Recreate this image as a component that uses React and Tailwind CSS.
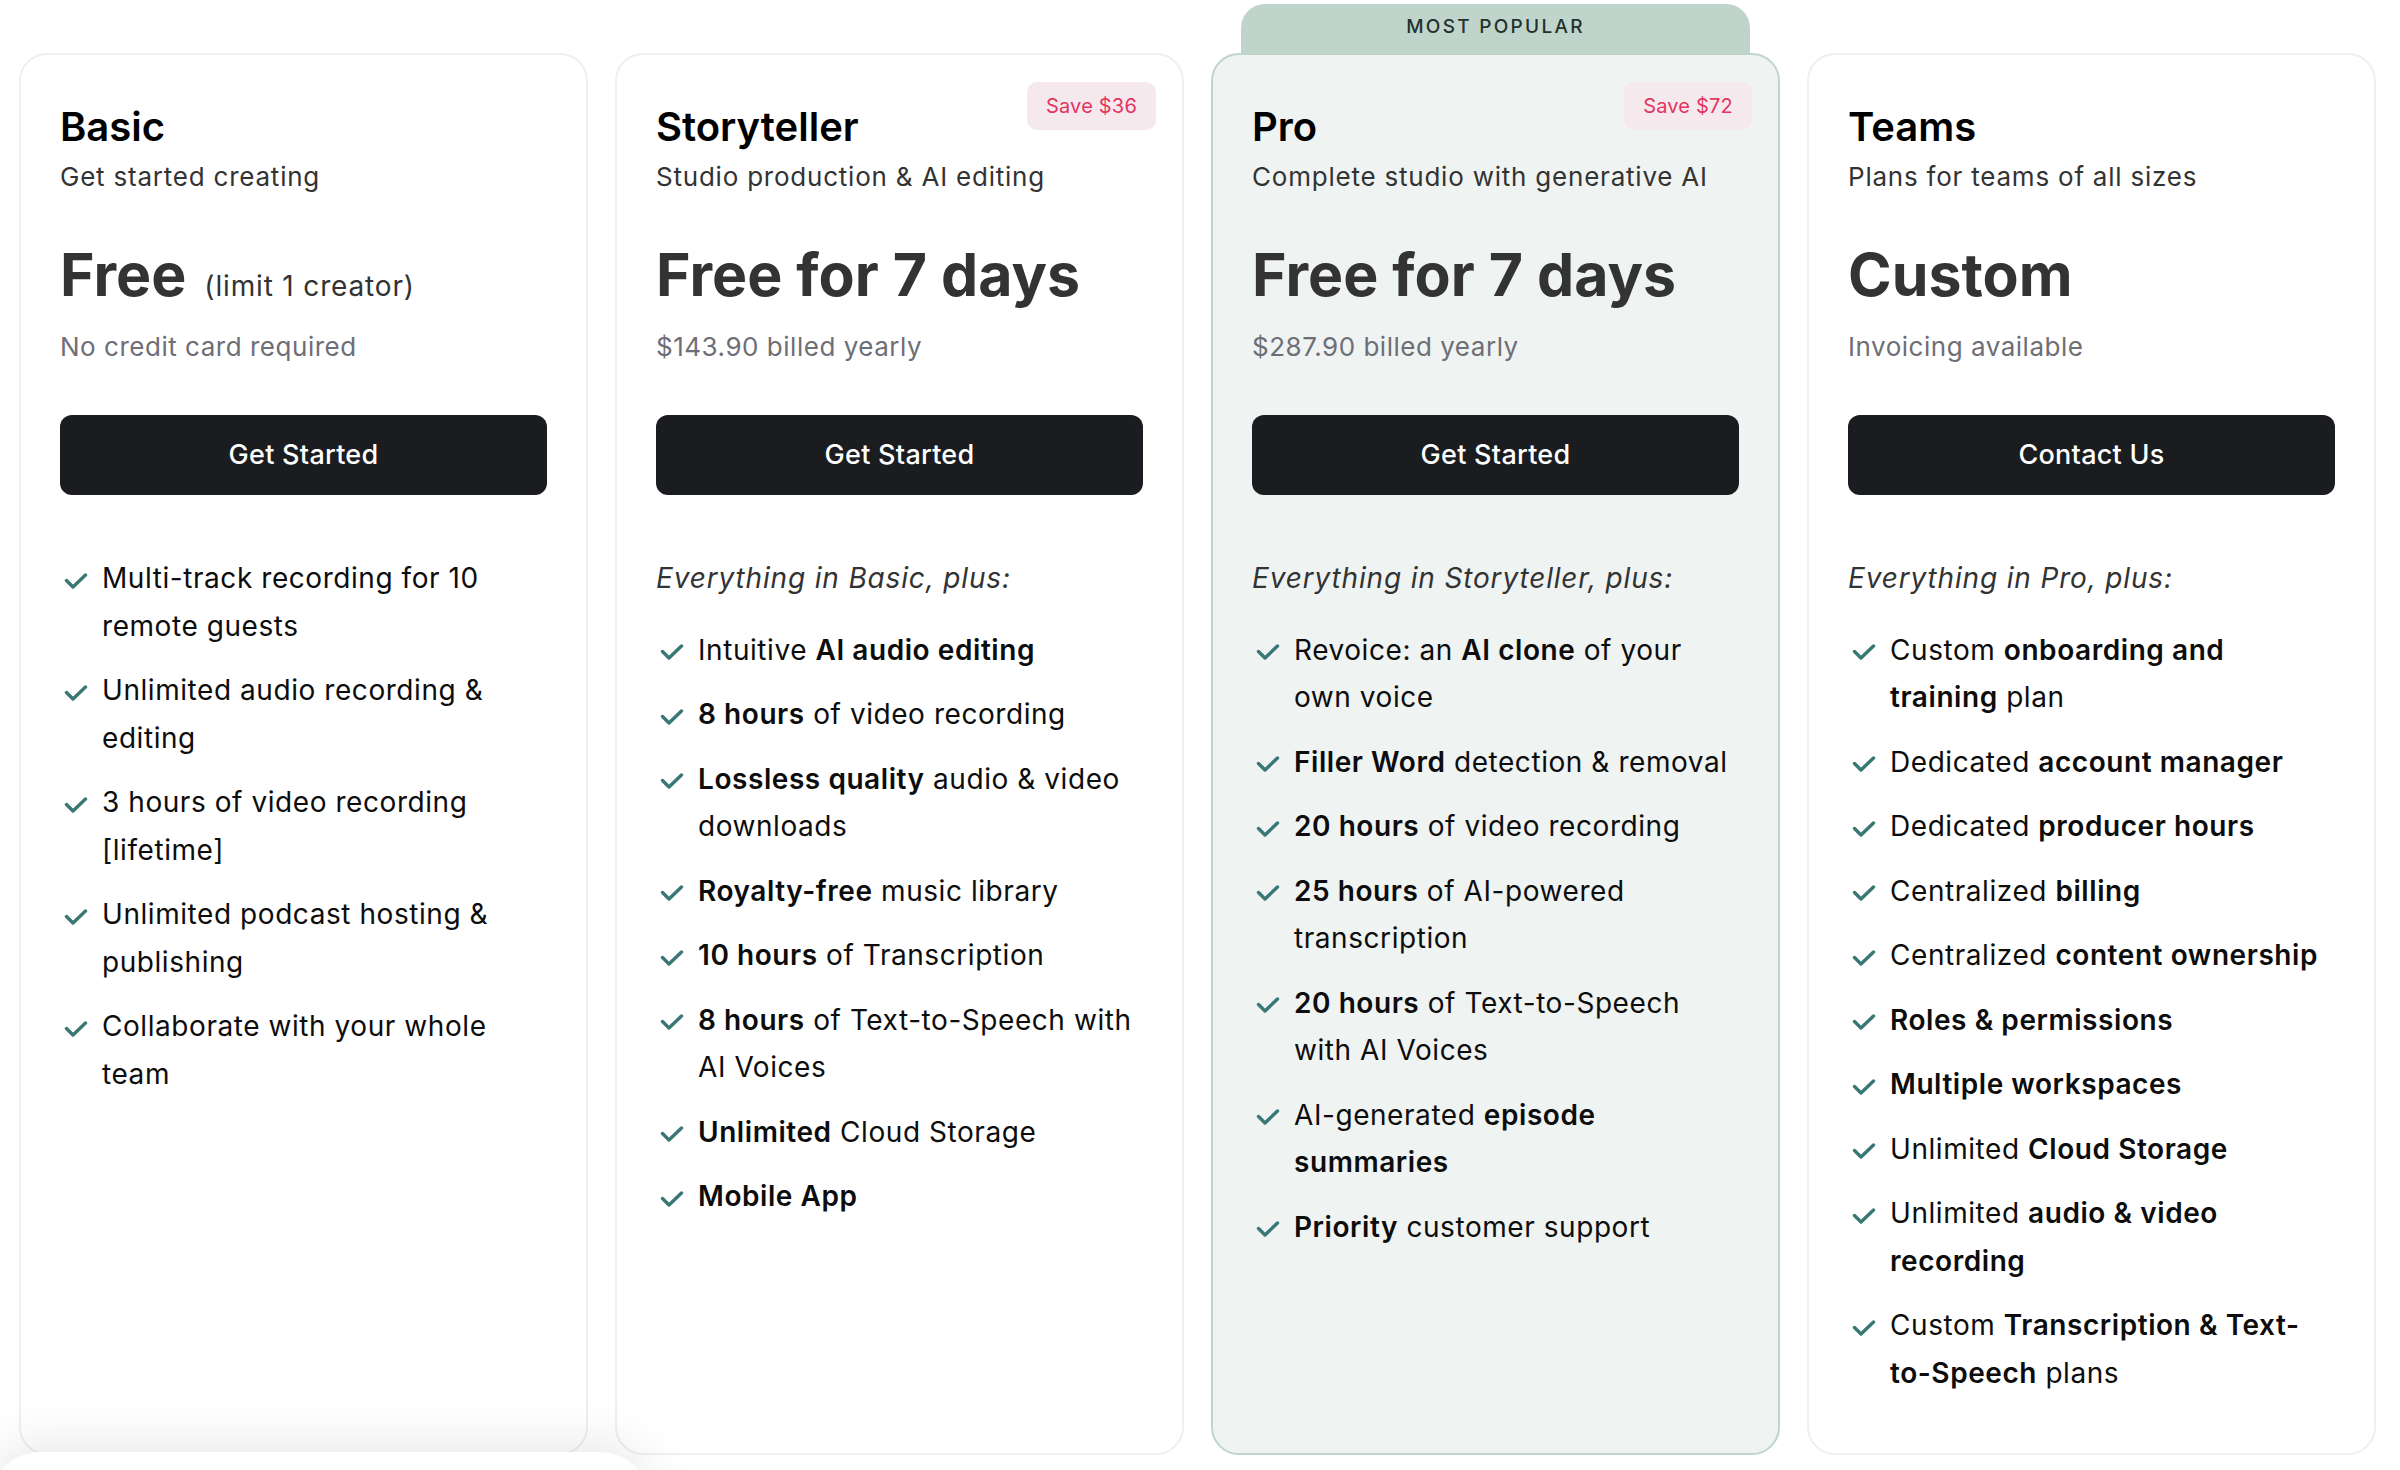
import React from 'react';

const plans = [
  {
    name: 'Basic',
    tagline: 'Get started creating',
    price: 'Free',
    priceNote: '(limit 1 creator)',
    sub: 'No credit card required',
    cta: 'Get Started',
    features: [
      'Multi-track recording for 10\nremote guests',
      'Unlimited audio recording &\nediting',
      '3 hours of video recording\n[lifetime]',
      'Unlimited podcast hosting &\npublishing',
      'Collaborate with your whole\nteam',
    ],
  },
  {
    name: 'Storyteller',
    tagline: 'Studio production & AI editing',
    price: 'Free for 7 days',
    sub: '$143.90 billed yearly',
    cta: 'Get Started',
    save: 'Save $36',
    intro: 'Everything in Basic, plus:',
    features: [
      'Intuitive **AI audio editing**',
      '**8 hours** of video recording',
      '**Lossless quality** audio & video\ndownloads',
      '**Royalty-free** music library',
      '**10 hours** of Transcription',
      '**8 hours** of Text-to-Speech with\nAI Voices',
      '**Unlimited** Cloud Storage',
      '**Mobile App**',
    ],
  },
  {
    name: 'Pro',
    tagline: 'Complete studio with generative AI',
    price: 'Free for 7 days',
    sub: '$287.90 billed yearly',
    cta: 'Get Started',
    save: 'Save $72',
    popular: true,
    intro: 'Everything in Storyteller, plus:',
    features: [
      'Revoice: an **AI clone** of your\nown voice',
      '**Filler Word** detection & removal',
      '**20 hours** of video recording',
      '**25 hours** of AI-powered\ntranscription',
      '**20 hours** of Text-to-Speech\nwith AI Voices',
      'AI-generated **episode\nsummaries**',
      '**Priority** customer support',
    ],
  },
  {
    name: 'Teams',
    tagline: 'Plans for teams of all sizes',
    price: 'Custom',
    sub: 'Invoicing available',
    cta: 'Contact Us',
    intro: 'Everything in Pro, plus:',
    features: [
      'Custom **onboarding and\ntraining** plan',
      'Dedicated **account manager**',
      'Dedicated **producer hours**',
      'Centralized **billing**',
      'Centralized **content ownership**',
      '**Roles & permissions**',
      '**Multiple workspaces**',
      'Unlimited **Cloud Storage**',
      'Unlimited **audio & video\nrecording**',
      'Custom **Transcription & Text-\nto-Speech** plans',
    ],
  },
];

// '**' toggles bold, '\n' forces the line break seen in the design
const renderRich = (text) =>
  text.split('**').map((part, i) => {
    const lines = part.split('\n');
    const content = lines.map((line, j) => (
      <React.Fragment key={j}>
        {j > 0 && <br />}
        {line}
      </React.Fragment>
    ));
    return i % 2 === 1 ? (
      <span key={i} className="font-semibold">{content}</span>
    ) : (
      <React.Fragment key={i}>{content}</React.Fragment>
    );
  });

const Check = () => (
  <svg viewBox="0 0 24 16" className="w-[24px] h-[16px] shrink-0" fill="none" stroke="#397874" strokeWidth="3.4" strokeLinecap="round" strokeLinejoin="round">
    <path d="M2.5 7.5 9 14 21.5 2" />
  </svg>
);

const PlanCard = ({ plan }) => {
  const cardColors = plan.popular
    ? 'bg-[#eff3f2] border-[#bfd5cc]'
    : 'bg-white border-[#efefef]';

  return (
    <div className={`relative flex flex-col rounded-[28px] border-2 px-[39px] pt-[48px] pb-[56px] ${cardColors}`}>
      {plan.popular && (
        <div className="absolute left-[28px] right-[28px] bottom-full h-[51px] rounded-t-[24px] bg-[#bfd5cc] flex items-center justify-center pb-[4px]">
          <span className="text-[19px] font-medium tracking-[0.12em] text-[#24312d]">MOST POPULAR</span>
        </div>
      )}

      {plan.save && (
        <div className="absolute top-[27px] right-[26px] h-[48px] px-[19px] rounded-[10px] bg-[#f6e9ee] flex items-center">
          <span className="text-[20px] text-[#e2355f] tracking-[0.01em]">{plan.save}</span>
        </div>
      )}

      <h2 className="text-[40px] leading-[48px] font-semibold text-black">{plan.name}</h2>
      <p className="mt-2 text-[26px] leading-[36px] text-[#333] tracking-[0.03em]">{plan.tagline}</p>

      <div className="mt-[48px] flex items-baseline gap-[18px]">
        <span className="text-[59px] leading-[64px] font-bold text-[#333]">{plan.price}</span>
        {plan.priceNote && (
          <span className="text-[28px] text-[#333] tracking-[0.03em]">{plan.priceNote}</span>
        )}
      </div>
      <p className="mt-[22px] text-[26px] leading-[36px] text-[#6e6e76] tracking-[0.02em]">{plan.sub}</p>

      <button className="mt-[50px] h-[80px] w-full rounded-[12px] bg-[#1b1c1f] text-white text-[27px] font-medium tracking-[0.01em]">
        {plan.cta}
      </button>

      <div className="mt-[60px]">
        {plan.intro && (
          <p className="mb-[24px] text-[28px] leading-[47.5px] italic text-[#333] tracking-[0.03em]">{plan.intro}</p>
        )}
        <ul className="flex flex-col gap-[17px]">
          {plan.features.map((f, i) => (
            <li key={i} className="flex gap-[14px]">
              <div className="h-[47.5px] w-[28px] flex items-center justify-end pt-[4px]">
                <Check />
              </div>
              <span className="text-[28px] leading-[47.5px] text-[#0d0d0d] tracking-[0.02em] whitespace-nowrap">{renderRich(f)}</span>
            </li>
          ))}
        </ul>
      </div>
    </div>
  );
};

export default function App() {
  return (
    <div className="relative h-[1470px] overflow-hidden bg-white font-[Inter,sans-serif]">
      <div className="grid grid-cols-4 gap-[27px] pl-[19px] pr-[24px] pt-[53px]">
        {plans.map((p) => (
          <PlanCard key={p.name} plan={p} />
        ))}
      </div>
      <div className="absolute left-[-10px] top-[1452px] w-[660px] h-[80px] rounded-t-[50px] bg-white shadow-[0_-10px_50px_rgba(0,0,0,0.09)]" />
    </div>
  );
}
